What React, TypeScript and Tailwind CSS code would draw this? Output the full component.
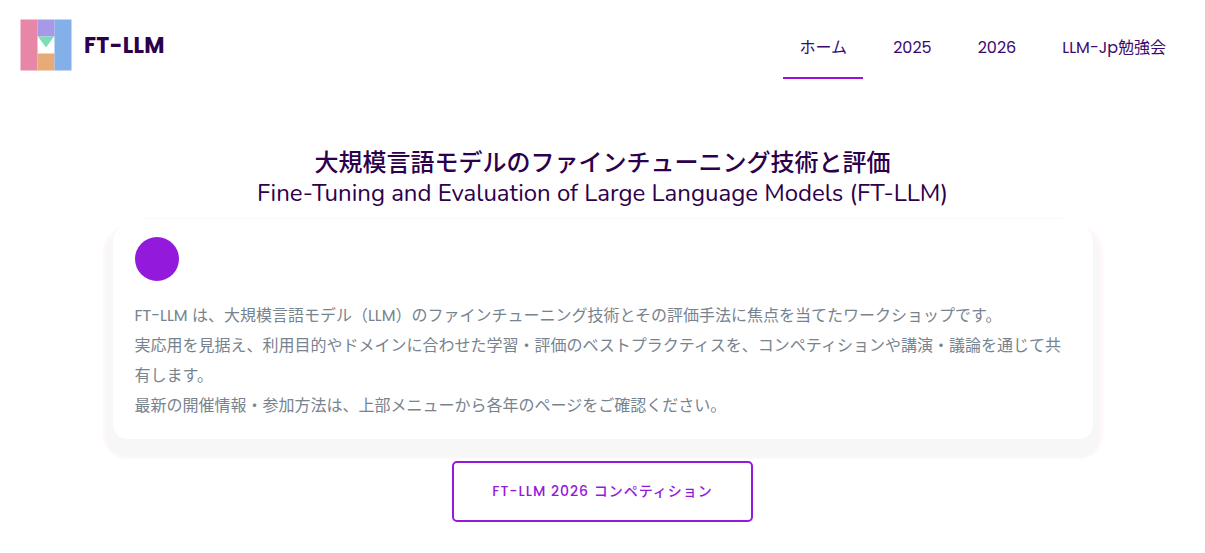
const NAV = [
  { label: "ホーム", active: true },
  { label: "2025" },
  { label: "2026" },
  { label: "LLM-Jp勉強会" },
];

const Logo = () => (
  <svg width="52" height="52" viewBox="0 0 52 52">
    <rect x="0.5" y="0.5" width="17" height="51" fill="#e886a8" />
    <rect x="17.5" y="0.5" width="17" height="17" fill="#a898e8" />
    <rect x="17.5" y="34.5" width="17" height="17" fill="#e8aa76" />
    <rect x="34.5" y="0.5" width="17" height="51" fill="#84b0ea" />
    <polygon points="18,17.5 34,17.5 26,28.5" fill="#7adfb6" />
  </svg>
);

export default function App() {
  return (
    <div className="min-h-[553px] overflow-hidden bg-white font-['Poppins','Inter','Noto_Sans_CJK_JP',sans-serif]">
      <header className="flex h-[90px] items-start justify-between pl-5 pr-[22px]">
        <div className="flex items-start gap-3 pt-[19px]">
          <Logo />
          <span className="text-[22px] font-bold leading-[53px] tracking-[0.3px] text-[#2d004b]">FT-LLM</span>
        </div>
        <nav className="flex items-start gap-[12px] pt-[15px]">
          {NAV.map((item) => (
            <a
              key={item.label}
              className={`flex h-[64px] items-center justify-center pt-[3px] text-[16px] text-[#3c0a6e] ${
                item.active ? "mr-[1px] w-[80px] border-b-2 border-[#9a10d8]" : "px-[17px] pb-[2px]"
              }`}
            >
              {item.label}
            </a>
          ))}
        </nav>
      </header>

      <main className="flex flex-col items-center pt-[58px]">
        <h1 className="text-center font-['Nunito','Noto_Sans_CJK_JP',sans-serif] text-[24px] font-medium leading-[30px] text-[#2d004b]">
          大規模言語モデルのファインチューニング技術と評価
        </h1>
        <p className="text-center font-['Nunito','Noto_Sans','Noto_Sans_CJK_JP',sans-serif] text-[24px] leading-[30px] text-[#2d004b]">
          Fine-Tuning and Evaluation of Large Language Models (FT-LLM)
        </p>
        <div className="mt-[10px] h-px w-[920px] bg-[#fdf6f9]" />
        <section className="mt-[8px] w-[980px] rounded-[14px] bg-white px-[22px] pb-[18px] pt-[10px] shadow-[0_11px_1px_7px_#f7f7f8,0_10px_1px_10px_#fff7fa]">
          <div className="h-11 w-11 rounded-full bg-[#941adb]" />
          <p className="mt-[20px] text-[16px] leading-[30px] text-[#77838f]">
            FT-LLM は、大規模言語モデル（LLM）のファインチューニング技術とその評価手法に焦点を当てたワークショップです。
            <br />
            実応用を見据え、利用目的やドメインに合わせた学習・評価のベストプラクティスを、コンペティションや講演・議論を通じて共有します。
            <br />
            最新の開催情報・参加方法は、上部メニューから各年のページをご確認ください。
          </p>
        </section>
        <a className="mt-[22px] flex h-[61px] w-[301px] items-center justify-center rounded-[5px] border-2 border-[#941adb] text-[14px] font-medium tracking-[1px] text-[#941adb]">
          FT-LLM 2026 コンペティション
        </a>
      </main>
    </div>
  );
}
